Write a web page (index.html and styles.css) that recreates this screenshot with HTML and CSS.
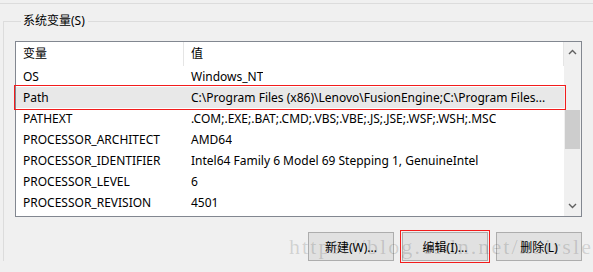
FILE: index.html
```html
<!DOCTYPE html>
<html lang="zh-CN">
<head>
  <meta charset="UTF-8" />
  <title>系统变量</title>
  <link rel="stylesheet" href="styles.css">
</head>
<body>
  <div class="prev-group"></div>

  <fieldset class="group">
    <legend>系统变量(S)</legend>

    <div class="listview">
      <div class="list-main">
        <div class="list-head">
          <div class="col-name">变量</div>
          <div class="col-value">值</div>
        </div>
        <div class="row"><div class="col-name">OS</div><div class="col-value">Windows_NT</div></div>
        <div class="row selected"><div class="col-name">Path</div><div class="col-value">C:\Program Files (x86)\Lenovo\FusionEngine;C:\Program Files...</div></div>
        <div class="row"><div class="col-name">PATHEXT</div><div class="col-value">.COM;.EXE;.BAT;.CMD;.VBS;.VBE;.JS;.JSE;.WSF;.WSH;.MSC</div></div>
        <div class="row"><div class="col-name">PROCESSOR_ARCHITECT</div><div class="col-value">AMD64</div></div>
        <div class="row"><div class="col-name">PROCESSOR_IDENTIFIER</div><div class="col-value">Intel64 Family 6 Model 69 Stepping 1, GenuineIntel</div></div>
        <div class="row"><div class="col-name">PROCESSOR_LEVEL</div><div class="col-value">6</div></div>
        <div class="row"><div class="col-name">PROCESSOR_REVISION</div><div class="col-value">4501</div></div>
      </div>
      <div class="scrollbar">
        <div class="arrow">
          <svg width="9" height="6" viewBox="0 0 9 6"><path d="M1 5 L4.5 1.5 L8 5" fill="none" stroke="#606060" stroke-width="1.4"/></svg>
        </div>
        <div class="track"><div class="thumb"></div></div>
        <div class="arrow">
          <svg width="9" height="6" viewBox="0 0 9 6"><path d="M1 1 L4.5 4.5 L8 1" fill="none" stroke="#606060" stroke-width="1.4"/></svg>
        </div>
      </div>
    </div>

    <div class="buttons">
      <button class="btn">新建(W)...</button>
      <button class="btn marked">编辑(I)...</button>
      <button class="btn">删除(L)</button>
    </div>
  </fieldset>

  <div class="watermark">https://blog.csdn.net/hairsley</div>
</body>
</html>
```

FILE: styles.css
```css
body {
  margin: 0;
  background: #f0f0f0;
  font-family: "Noto Sans", "Noto Sans CJK SC", sans-serif;
  font-size: 12px;
  color: #000;
  position: relative;
  height: 272px;
  overflow: hidden;
}
.prev-group {
  height: 3px;
  border-bottom: 1px solid #dcdcdc;
}
.group {
  margin: 10px 0 0 3px;
  padding: 0 0 0 11px;
  border: 1px solid #dcdcdc;
  border-right: none;
  border-bottom: none;
  min-width: 0;
}
.group legend {
  margin-left: 6px;
  padding: 0 3px 0 2px;
  line-height: 14px;
}
.listview {
  display: flex;
  margin-top: 13px;
  width: 565px;
  height: 174px;
  border: 1px solid #828790;
  background: #fff;
}
.list-main {
  flex: 1;
  min-width: 0;
}
.list-head {
  display: flex;
  height: 24px;
  line-height: 24px;
  border-right: 1px solid #e5e5e5;
}
.list-head .col-name {
  border-right: 1px solid #e5e5e5;
}
.row {
  display: flex;
  height: 21px;
  line-height: 21px;
  white-space: nowrap;
}
.col-name {
  width: 168px;
  padding-left: 7px;
  box-sizing: border-box;
  flex: none;
  overflow: hidden;
}
.col-value {
  padding-left: 7px;
  overflow: hidden;
  white-space: nowrap;
}
.row.selected {
  background: #e8e8e8;
  outline: 1.5px solid #f21c1c;
  outline-offset: 1px;
  position: relative;
}
.scrollbar {
  width: 17px;
  background: #f0f0f0;
  display: flex;
  flex-direction: column;
}
.arrow {
  height: 20px;
  display: flex;
  align-items: center;
  justify-content: center;
}
.track {
  flex: 1;
  padding-top: 48px;
}
.thumb {
  margin-left: 1px;
  width: 15px;
  height: 39px;
  background: #cdcdcd;
}
.buttons {
  display: flex;
  justify-content: flex-end;
  gap: 8px;
  width: 567px;
  margin-top: 15px;
}
.btn {
  width: 86px;
  height: 29px;
  background: #e1e1e1;
  border: 1px solid #adadad;
  font-family: "Noto Sans", "Noto Sans CJK SC", sans-serif;
  font-size: 12px;
  color: #000;
  padding: 0;
}
.btn.marked {
  outline: 1.5px solid #f21c1c;
  outline-offset: 1px;
}
.watermark {
  position: absolute;
  left: 289px;
  top: 234px;
  font-family: "Liberation Serif", serif;
  font-size: 22px;
  letter-spacing: 2.1px;
  color: rgba(0, 0, 0, 0.14);
  white-space: nowrap;
}
```
